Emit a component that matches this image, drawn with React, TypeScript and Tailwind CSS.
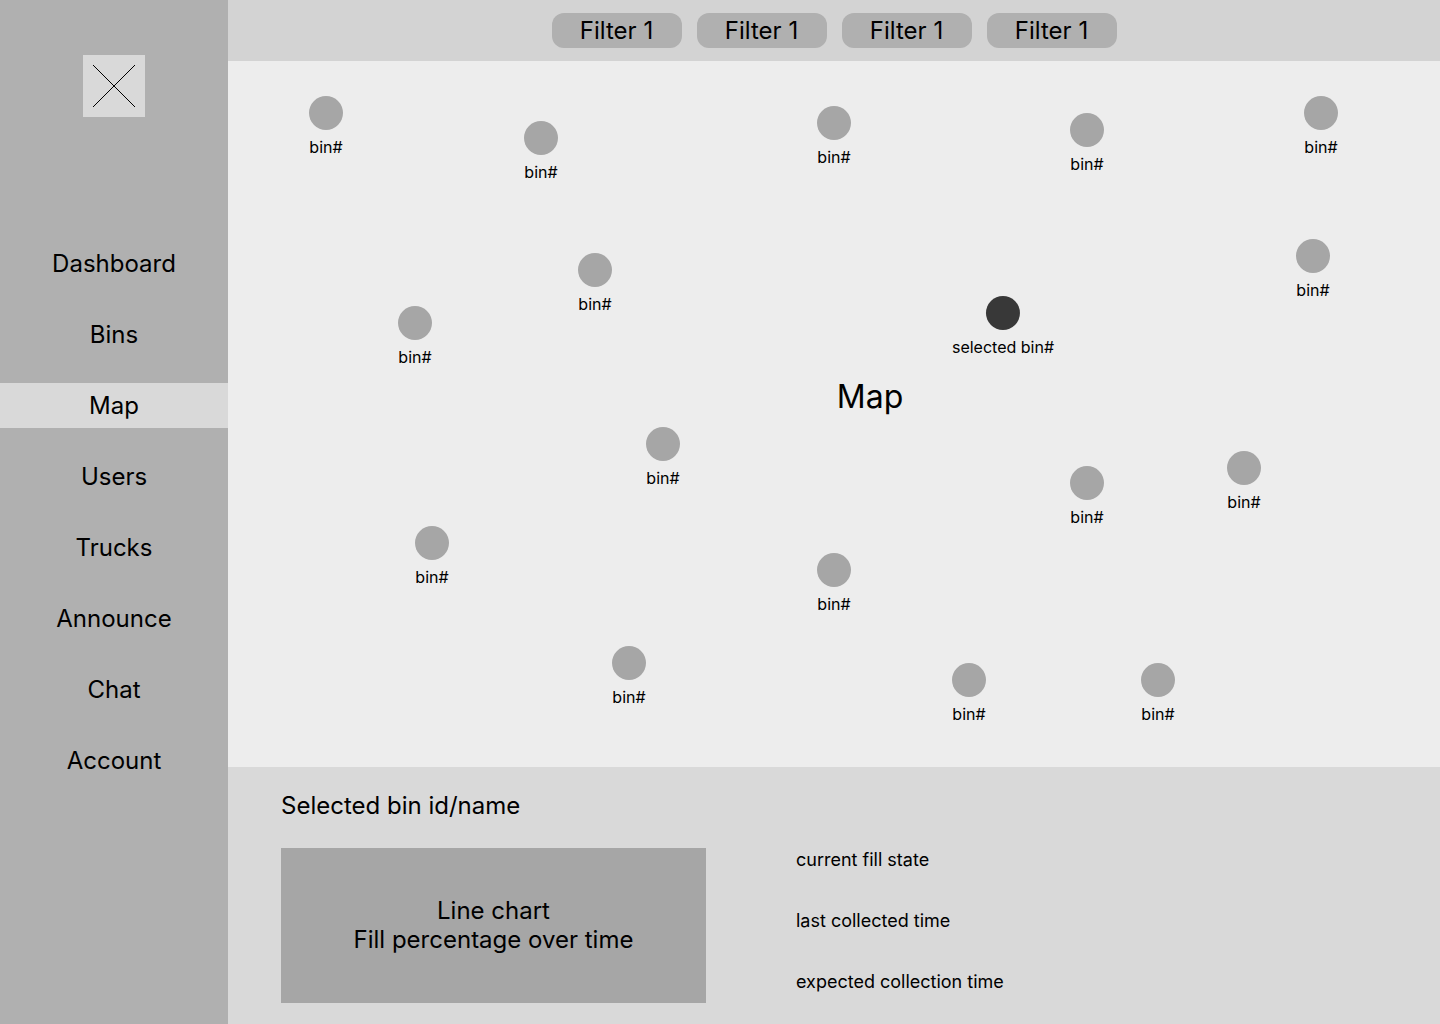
const navItems = ["Dashboard", "Bins", "Map", "Users", "Trucks", "Announce", "Chat", "Account"];

const filters = [1, 2, 3, 4];

type Bin = { x: number; y: number; selected?: boolean };

// Pin centres on the map, in map pixels.
const bins: Bin[] = [
  { x: 98, y: 52 },
  { x: 313, y: 77 },
  { x: 606, y: 62 },
  { x: 859, y: 69 },
  { x: 1093, y: 52 },
  { x: 367, y: 209 },
  { x: 187, y: 262 },
  { x: 1085, y: 195 },
  { x: 775, y: 252, selected: true },
  { x: 435, y: 383 },
  { x: 859, y: 422 },
  { x: 1016, y: 407 },
  { x: 204, y: 482 },
  { x: 606, y: 509 },
  { x: 401, y: 602 },
  { x: 741, y: 619 },
  { x: 930, y: 619 },
];

function Logo() {
  return (
    <div className="flex size-[62px] items-center justify-center bg-[#d9d9d9]">
      <svg viewBox="0 0 42 42" className="size-[42px]" stroke="#000" strokeWidth="1" aria-hidden="true">
        <path d="M0 0L42 42M42 0L0 42" />
      </svg>
    </div>
  );
}

function Sidebar() {
  return (
    <aside className="flex w-57 shrink-0 flex-col items-center bg-[#b0b0b0] pt-[55px]">
      <Logo />
      <nav className="mt-31 flex w-full flex-col gap-[26px]">
        {navItems.map((item) => (
          <a
            key={item}
            href="#"
            aria-current={item === "Map" ? "page" : undefined}
            className="flex h-[45px] items-center justify-center text-2xl aria-[current=page]:bg-[#d9d9d9]"
          >
            {item}
          </a>
        ))}
      </nav>
    </aside>
  );
}

function BinPin({ bin }: { bin: Bin }) {
  return (
    <button
      type="button"
      className="absolute flex -translate-x-1/2 flex-col items-center gap-2 whitespace-nowrap"
      style={{ left: bin.x, top: bin.y - 17 }}
    >
      <span className={bin.selected ? "size-[34px] rounded-full bg-[#383838]" : "size-[34px] rounded-full bg-[#a6a6a6]"} />
      <span className="text-base leading-[19px]">{bin.selected ? "selected bin#" : "bin#"}</span>
    </button>
  );
}

export default function App() {
  return (
    <div className="flex min-h-screen bg-[#ededed] font-['Inter',sans-serif] text-black">
      <Sidebar />
      <main className="flex min-w-0 flex-1 flex-col">
        <header className="flex justify-center gap-[15px] bg-[#d3d3d3] py-[13px]">
          {filters.map((id) => (
            <button key={id} type="button" className="h-[35px] w-[130px] rounded-xl bg-[#b0b0b0] text-2xl">
              Filter 1
            </button>
          ))}
        </header>

        <section aria-label="Map" className="relative min-h-[700px] flex-1">
          <h1 className="pt-79 pl-18 text-center text-[32px] leading-[39px]">Map</h1>
          {bins.map((bin) => (
            <BinPin key={`${bin.x}-${bin.y}`} bin={bin} />
          ))}
        </section>

        <section className="bg-[#d9d9d9] px-[53px] pt-6 pb-[21px]">
          <h2 className="text-2xl leading-[29px]">Selected bin id/name</h2>
          <div className="mt-7 flex gap-[90px]">
            <div className="flex h-[155px] w-[425px] flex-col justify-center bg-[#a6a6a6] pb-0.5 text-center text-2xl leading-[29px]">
              <p>
                Line chart
                <br />
                Fill percentage over time
              </p>
            </div>
            <ul className="flex flex-col gap-[37px] text-lg leading-6">
              <li>current fill state</li>
              <li>last collected time</li>
              <li>expected collection time</li>
            </ul>
          </div>
        </section>
      </main>
    </div>
  );
}
